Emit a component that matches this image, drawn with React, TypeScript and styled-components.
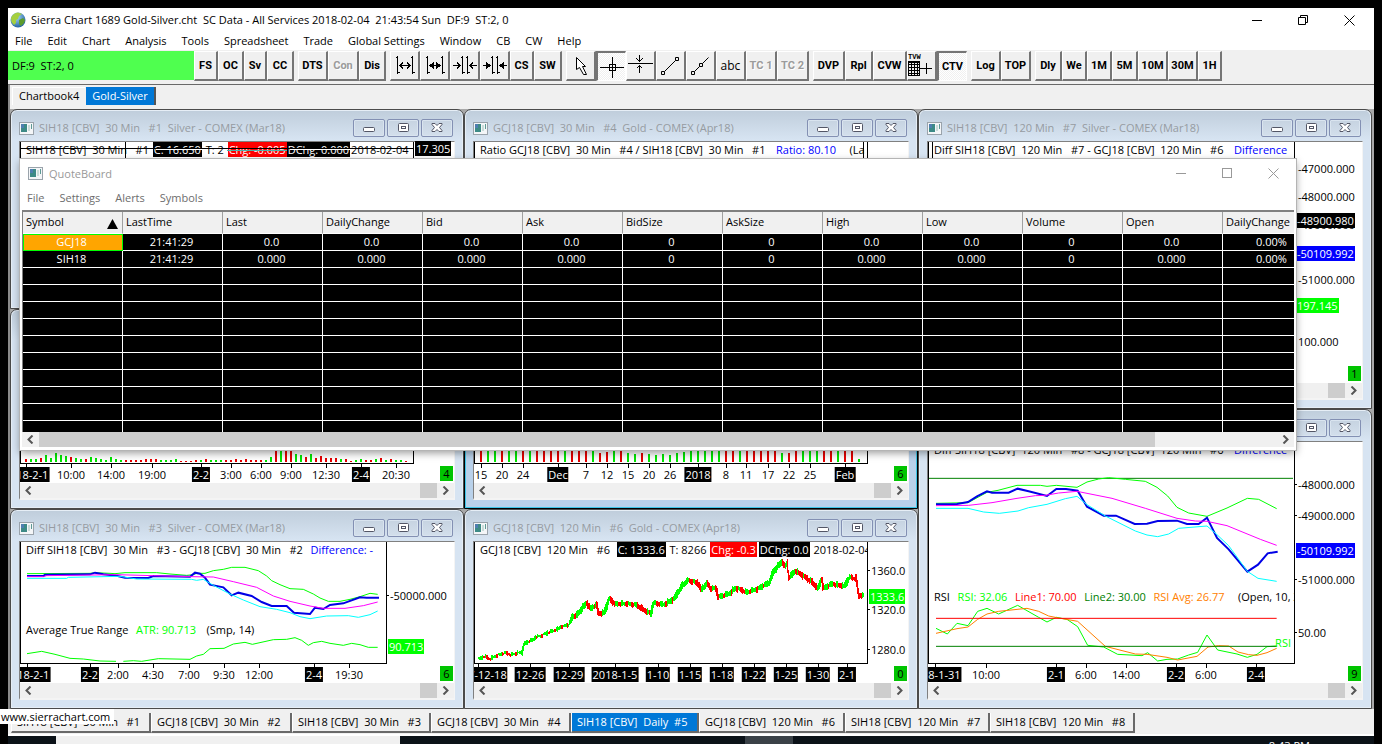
import React from "react";
import styled, { createGlobalStyle, css } from "styled-components";

const Global = createGlobalStyle`
  *, *::before, *::after { box-sizing: border-box; }
  html, body { margin: 0; background: #000; }
  body {
    font-family: "Open Sans", "Noto Sans", sans-serif;
    font-size: 11px;
    line-height: 16px;
    color: #000;
  }
  button, a { font: inherit; color: inherit; }
  button { margin: 0; padding: 0; border: 0; background: none; }
`;

/* ---------- shell ---------- */

const Desktop = styled.div`
  position: relative;
  padding: 8px 8px 0;
  height: 100vh;
  overflow: hidden;
  background: #000;
`;

const AppWindow = styled.div`
  display: flex;
  flex-direction: column;
  background: #f0f0f0;
`;

const TitleBar = styled.header`
  display: flex;
  align-items: center;
  height: 24px;
  padding: 0 2px;
  gap: 5px;
  background: #fff;
  white-space: pre;
`;

const TitleText = styled.h1`
  flex: 1;
  margin: 0;
  font-size: 11px;
  font-weight: 400;
`;

const WindowControls = styled.div`
  display: flex;
  button {
    display: grid;
    place-items: center;
    width: 46px;
    height: 20px;
  }
`;

const MenuBar = styled.nav`
  display: flex;
  gap: 15px;
  height: 18px;
  padding: 0 7px;
  background: #fff;
  button { white-space: pre; }
`;

const Toolbar = styled.div`
  display: flex;
  gap: 4px;
  height: 35px;
  padding: 1px 0 2px;
  border-bottom: 1px solid #696969;
  background: #f0f0f0;
`;

const Status = styled.div`
  width: 186px;
  height: 29px;
  padding: 7px 4px;
  margin-right: -4px;
  background: #4fff4f;
  white-space: pre;
`;

const Group = styled.div`
  display: flex;
`;

const ToolButton = styled.button<{ $w: number; $on?: boolean; $plain?: boolean }>`
  display: grid;
  place-items: center;
  width: ${(p) => p.$w}px;
  height: 30px;
  border: solid;
  border-width: 1px 2px 2px 1px;
  border-color: #fff #757575 #757575 #fff;
  background: #f0f0f0;
  font-family: ${(p) => (p.$plain ? `"Open Sans", sans-serif` : `Roboto, "Liberation Sans", sans-serif`)};
  font-size: ${(p) => (p.$plain ? 12 : 11)}px;
  font-weight: ${(p) => (p.$plain ? 400 : 700)};
  white-space: pre;
  ${(p) =>
    p.$on &&
    css`
      border-width: 2px 1px 1px 2px;
      border-color: #757575 #fff #fff #757575;
      background: repeating-conic-gradient(#fff 0 25%, #f0f0f0 0 50%) 0 0 / 2px 2px;
    `}
  &:disabled { color: #9b9b9b; text-shadow: 1px 1px 0 #fff; }
`;

const BookTabs = styled.div`
  display: flex;
  height: 24px;
  padding: 2px;
  padding-bottom: 4px;
  border-left: 2px solid #8a8a8a;
`;

const BookTab = styled.button<{ $on?: boolean }>`
  padding: 0 6px 2px;
  margin-right: 1px;
  border-left: 1px solid #fff;
  border-top: 1px solid #fff;
  ${(p) =>
    p.$on &&
    css`
      padding: 0 6px;
      border: 0;
      border-right: 2px solid #555;
      background: #0078d7;
      color: #fff;
    `}
`;

const Workspace = styled.main`
  position: relative;
  display: grid;
  grid-template-columns: repeat(3, minmax(0, 1fr));
  grid-template-rows: repeat(6, 100px);
  padding-right: 2px;
  border-left: 2px solid #8a8a8a;
  background: #a8a8a8;
`;

const WindowTabs = styled.div`
  display: flex;
  height: 27px;
  padding: 4px 3px;
  border-bottom: 2px solid #fff;
`;

const WindowTab = styled.button<{ $w: number; $on?: boolean }>`
  width: ${(p) => p.$w}px;
  padding: 0 4px 0 5px;
  height: 20px;
  border-right: 2px solid #696969;
  border-bottom: 2px solid #696969;
  border-left: 1px solid #fff;
  text-align: left;
  white-space: pre;
  overflow: hidden;
  ${(p) => p.$on && css`background: #0078d7; color: #fff;`}
`;

const Taskbar = styled.footer`
  display: flex;
  height: 12px;
  background: #0b1218;
`;

const SearchBox = styled.div`
  width: 344px;
  margin-left: 48px;
  background: #f0f0f0;
`;

const TaskItem = styled.div`
  width: 48px;
  margin-left: 345px;
  background: #3a4147;
`;

const Clock = styled.div`
  margin: 2px 64px 0 auto;
  color: #fff;
`;

const StatusLink = styled.a`
  position: absolute;
  left: 0;
  bottom: 20px;
  width: 114px;
  height: 15px;
  padding: 0 1px;
  background: #fff;
  line-height: 15px;
  text-decoration: none;
`;

/* ---------- chart windows ---------- */

const Frame = styled.section<{ $col: number; $rows: string; $active?: boolean }>`
  display: flex;
  flex-direction: column;
  grid-column: ${(p) => p.$col};
  grid-row: ${(p) => p.$rows};
  padding: 0 8px 8px;
  border: 1px solid ${(p) => (p.$active ? "#000" : "#4b4b4b")};
  border-radius: 7px 7px 0 0;
  background: ${(p) => (p.$active ? "#b9d1ea" : "linear-gradient(#bfcddb, #d7e4f2 30px)")};
  box-shadow: inset 0 0 0 1px ${(p) => (p.$active ? "#3fc6e8" : "#e6eef6")};
`;

const FrameBar = styled.header`
  display: flex;
  align-items: center;
  gap: 5px;
  height: 31px;
  padding: 5px 2px 0 0;
  color: #969ba1;
  white-space: pre;
`;

const FrameTitle = styled.h2`
  flex: 1;
  margin: 0;
  font-size: 11px;
  font-weight: 400;
  overflow: hidden;
`;

const FrameButton = styled.button`
  display: grid;
  place-items: center;
  width: 32px;
  height: 18px;
  margin-left: -3px;
  border: 1px solid #8390b3;
  border-radius: 2px;
  background: linear-gradient(#c6d3e1, #d3dfec);
  box-shadow: inset 0 0 0 1px #d9e4ef;
`;

const Client = styled.div`
  display: flex;
  flex-direction: column;
  flex: 1;
  border: solid;
  border-width: 1px 1px 2px;
  border-color: #808080 #f4f4f4 #f4f4f4 #808080;
  background: #fff;
  min-height: 0;
`;

const ChartArea = styled.div`
  position: relative;
  display: flex;
  flex: 1;
  min-height: 0;
`;

const PlotColumn = styled.div`
  display: flex;
  flex-direction: column;
  flex: 1;
  min-width: 0;
`;

const Plot = styled.div`
  position: relative;
  flex: 1;
  border: 1px solid #000;
  border-top: 0;
  overflow: hidden;
  svg { display: block; position: absolute; inset: 0; width: 100%; height: 100%; }
`;

const Legend = styled.div`
  position: absolute;
  z-index: 1;
  left: 4px;
  display: flex;
  height: 15px;
  line-height: 15px;
  white-space: pre;
`;

const Tag = styled.span<{ $bg?: string; $fg?: string }>`
  background: ${(p) => p.$bg ?? "transparent"};
  color: ${(p) => p.$fg ?? (p.$bg ? "#fff" : "#000")};
  padding: 0 1px;
`;

const TimeAxis = styled.div`
  position: relative;
  height: 19px;
  overflow: hidden;
`;

const TimeMark = styled.span<{ $dark?: boolean }>`
  position: absolute;
  top: 3px;
  height: 15px;
  padding: 0 1px;
  line-height: 15px;
  transform: translateX(-50%);
  white-space: nowrap;
  ${(p) => p.$dark && css`background: #000; color: #fff;`}
`;

const Tick = styled.i`
  position: absolute;
  top: 0;
  width: 1px;
  height: 4px;
  background: #000;
`;

const PriceAxis = styled.div<{ $w: number }>`
  position: relative;
  width: ${(p) => p.$w}px;
`;

const PriceMark = styled.span<{ $bg?: string }>`
  position: absolute;
  left: ${(p) => (p.$bg ? 1 : 2)}px;
  padding: 0 1px;
  height: 15px;
  margin-top: -7px;
  line-height: 15px;
  white-space: nowrap;
  ${(p) => p.$bg && css`background: ${p.$bg}; color: #fff;`}
  ${(p) => !p.$bg && css`
    &::before {
      content: "";
      position: absolute;
      left: -2px;
      top: 7px;
      width: 2px;
      height: 1px;
      background: #000;
    }
  `}
`;

const Badge = styled.span`
  position: absolute;
  right: 1px;
  bottom: 2px;
  width: 13px;
  height: 15px;
  background: #00c400;
  line-height: 15px;
  text-align: center;
`;

const ScrollRow = styled.div`
  display: flex;
  justify-content: space-between;
  align-items: center;
  height: 15px;
  padding: 0 4px;
  background: #f0f0f0;
`;

const ScrollThumb = styled.div<{ $wide?: boolean }>`
  width: 17px;
  height: 15px;
  margin-left: auto;
  margin-right: 5px;
  background: #cdcdcd;
  ${(p) =>
    p.$wide &&
    css`
      flex: 1;
      margin-left: 5px;
      margin-right: 127px;
    `}
`;

/* ---------- quote board ---------- */

const Board = styled.section`
  position: absolute;
  z-index: 5;
  top: 50px;
  left: 10px;
  right: 78px;
  height: 291px;
  display: flex;
  flex-direction: column;
  padding: 0 2px 3px;
  background: #fff;
  box-shadow: 0 0 0 1px #b4b4b4, 0 3px 8px rgba(0, 0, 0, 0.4);
`;

const BoardTitle = styled.header`
  display: flex;
  align-items: center;
  gap: 6px;
  height: 29px;
  margin-right: -2px;
  padding-left: 6px;
  color: #999;
  h2 { flex: 1; margin: 0; font-size: 11px; font-weight: 400; }
`;

const BoardMenu = styled.nav`
  display: flex;
  gap: 15px;
  height: 22px;
  padding: 0 5px 2px;
  color: #6d6d6d;
`;

const BoardBody = styled.div`
  flex: 1;
  min-height: 0;
  overflow: hidden;
  border-top: 2px solid #808080;
  border-left: 1px solid #808080;
  background: #000;
`;

const Quotes = styled.table`
  width: 1300px;
  table-layout: fixed;
  border-collapse: separate;
  border-spacing: 0;
  color: #fff;
  th, td {
    padding: 0;
    font-weight: 400;
    border-right: 1px solid #fff;
    border-bottom: 1px solid #fff;
    white-space: nowrap;
    overflow: hidden;
  }
  th {
    position: relative;
    height: 22px;
    padding: 0 3px 1px;
    background: #f0f0f0;
    border-right-color: #a0a0a0;
    color: #000;
    text-align: left;
  }
  td {
    height: 17px;
    padding-right: 2px;
    line-height: 16px;
    text-align: center;
  }
  td.selected {
    background: #ffa500;
    outline: 1px solid #00ff00;
    outline-offset: -1px;
  }
`;

const SortMark = styled.svg`
  position: absolute;
  right: 4px;
  top: 7px;
`;

/* ---------- icons ---------- */

const Globe = () => (
  <svg width="16" height="16" viewBox="0 0 16 16" aria-hidden="true">
    <defs>
      <radialGradient id="sea" cx="0.4" cy="0.3" r="0.8">
        <stop offset="0" stopColor="#a8dcf5" />
        <stop offset="1" stopColor="#14539a" />
      </radialGradient>
    </defs>
    <circle cx="8" cy="8" r="7.5" fill="url(#sea)" />
    <path d="M1 6Q3 1 8 0.5L12 2 9 4 8 7 6 8 6 11 4 13 1.5 10Z" fill="#a5cf3f" />
    <path d="M9 8L13 6 15 8 14 11 11 14 9 12Z" fill="#5d9c2c" />
  </svg>
);

const SheetIcon = () => (
  <svg width="15" height="13" viewBox="0 0 15 13" aria-hidden="true">
    <rect x="0.5" y="0.5" width="14" height="12" fill="#f4f6f8" stroke="#9aa3ab" />
    <rect x="2" y="2" width="6" height="8" fill="#3d8a86" />
    <rect x="2" y="2" width="3" height="4" fill="#4f7fb0" />
    <rect x="9" y="3" width="2" height="6" fill="#c9dcd8" />
    <rect x="12" y="2" width="1" height="5" fill="#5d9a95" />
  </svg>
);

const MinGlyph = ({ color = "#000" }: { color?: string }) => (
  <svg width="11" height="11" aria-hidden="true"><path d="M0 5.5H10" stroke={color} /></svg>
);
const RestoreGlyph = () => (
  <svg width="11" height="11" aria-hidden="true">
    <path d="M0.5 2.5H7.5V9.5H0.5ZM2.5 2.5V0.5H9.5V7.5H7.5" fill="none" stroke="#000" />
  </svg>
);
const MaxGlyph = () => (
  <svg width="11" height="11" aria-hidden="true"><rect x="0.5" y="0.5" width="9" height="9" fill="none" stroke="#999" /></svg>
);
const CloseGlyph = ({ color = "#000" }: { color?: string }) => (
  <svg width="11" height="11" aria-hidden="true"><path d="M0.5 0.5L10.5 10.5M10.5 0.5L0.5 10.5" stroke={color} /></svg>
);

const FrameGlyph = ({ kind }: { kind: "min" | "max" | "close" }) => (
  <svg width="12" height="10" viewBox="0 0 12 10" aria-hidden="true">
    {kind === "min" && <rect x="0.5" y="4.5" width="11" height="4" rx="1" fill="#fff" stroke="#535666" />}
    {kind === "max" && (
      <g fill="#fff" stroke="#535666">
        <rect x="1.5" y="0.5" width="10" height="8" rx="1" />
        <rect x="4.5" y="3.5" width="4" height="2" />
      </g>
    )}
    {kind === "close" && (
      <path
        d="M1 0.5H4L6 2.5 8 0.5H11V1.5L8.5 4.5 11 7.5V8.5H8L6 6.5 4 8.5H1V7.5L3.5 4.5 1 1.5Z"
        fill="#fff"
        stroke="#535666"
      />
    )}
  </svg>
);

const Chevron = ({ dir }: { dir: "l" | "r" }) => (
  <svg width="8" height="9" viewBox="0 0 8 9" aria-hidden="true">
    <path d={dir === "l" ? "M6.5 0.5L2.5 4.5L6.5 8.5" : "M1.5 0.5L5.5 4.5L1.5 8.5"} fill="none" stroke="#555" strokeWidth="2" />
  </svg>
);

const bar = (x: number) => `M${x} 5V23M${x - 2} 6.5H${x}M${x} 21.5H${x + 2}`;

const toolArt: Record<string, React.ReactNode> = {
  widen: <path d={`${bar(7.5)}${bar(22.5)}M10 14.5H20M13 11.5L10 14.5 13 17.5M17 11.5L20 14.5 17 17.5`} fill="none" />,
  widenBold: (
    <>
      <path d={`${bar(7.5)}${bar(22.5)}M10 14.5H20`} fill="none" />
      <path d="M13.5 11.5V17.5L10 14.5ZM16.5 11.5V17.5L20 14.5Z" fill="#000" />
    </>
  ),
  narrow: <path d={`${bar(12.5)}${bar(17.5)}M3 14.5H10M7 11.5L10 14.5 7 17.5M27 14.5H20M23 11.5L20 14.5 23 17.5`} fill="none" />,
  narrowBold: (
    <>
      <path d={`${bar(12.5)}${bar(17.5)}M3 14.5H10M27 14.5H20`} fill="none" />
      <path d="M6.5 11.5V17.5L10 14.5ZM23.5 11.5V17.5L20 14.5Z" fill="#000" />
    </>
  ),
  pointer: <path d="M10.5 6.5V18.5L13.5 16.5 17.5 23.5H20.5L16.5 15.5H19.5Z" fill="#fff" />,
  cross: <path d="M3 15.5H27M15.5 5V26M12.5 12.5H18.5V18.5H12.5Z" fill="none" />,
  level: <path d="M2 12.5H27M13.5 4V10M10.5 7.5L13.5 10.5 16.5 7.5M13.5 15V22M10.5 17.5L13.5 14.5 16.5 17.5" fill="none" />,
  line: <path d="M8.5 20.5L19.5 9.5M5.5 20.5H8.5V23.5H5.5ZM19.5 6.5H22.5V9.5H19.5Z" fill="none" />,
  ray: <path d="M8.5 20.5L13.5 15.5M16.5 12.5L22.5 6.5M5.5 20.5H8.5V23.5H5.5ZM13.5 12.5H16.5V15.5H13.5Z" fill="none" />,
  grid: (
    <>
      <text x="1" y="8" fontSize="7" fontWeight="700" fontFamily="Liberation Mono, monospace" stroke="none" fill="#000">TVW</text>
      <path d="M1.5 10V24H12.5V10ZM1 13.5H13M1 16.5H13M1 19.5H13M1 22H13M4.5 10V24M7.5 10V24M10 10V24M2 11.5H12M13 17.5H25M19.5 12V23" fill="none" />
    </>
  ),
};

const smoothArt = ["pointer", "line", "ray"];

const ToolIcon = ({ name }: { name: string }) => (
  <svg width="27" height="27" viewBox="1 1 27 27" stroke="#000" shapeRendering={smoothArt.includes(name) ? "auto" : "crispEdges"} aria-hidden="true">
    {toolArt[name]}
  </svg>
);

/* ---------- toolbar data ---------- */

type Tool = { t?: string; icon?: string; w: number; on?: boolean; off?: boolean; plain?: boolean };

const tools: Tool[][] = [
  [{ t: "FS", w: 24 }, { t: "OC", w: 26 }, { t: "Sv", w: 23 }, { t: "CC", w: 27 }],
  [{ t: "DTS", w: 30 }, { t: "Con", w: 31, off: true }, { t: "Dis", w: 27 }],
  [
    { icon: "widen", w: 30 }, { icon: "widenBold", w: 30 }, { icon: "narrow", w: 30 }, { icon: "narrowBold", w: 30 },
    { t: "CS", w: 24 }, { t: "SW", w: 28 },
  ],
  [
    { icon: "pointer", w: 30 }, { icon: "cross", w: 30, on: true }, { icon: "level", w: 30 }, { icon: "line", w: 30 },
    { icon: "ray", w: 30 }, { t: "abc", w: 30, plain: true }, { t: "TC 1", w: 31, off: true }, { t: "TC 2", w: 32, off: true },
  ],
  [{ t: "DVP", w: 32 }, { t: "Rpl", w: 28 }, { t: "CVW", w: 34 }, { icon: "grid", w: 30 }, { t: "CTV", w: 30, on: true }],
  [{ t: "Log", w: 30 }, { t: "TOP", w: 30 }],
  [
    { t: "Dly", w: 27 }, { t: "We", w: 25 }, { t: "1M", w: 25 }, { t: "5M", w: 26 },
    { t: "10M", w: 30 }, { t: "30M", w: 30 }, { t: "1H", w: 24 },
  ],
];

const menus = ["File", "Edit", "Chart", "Analysis", "Tools", "Spreadsheet", "Trade", "Global Settings", "Window", "CB", "CW", "Help"];

const chartTabs: { t: string; w: number; on?: boolean }[] = [
  { t: "SIH18 [CBV]  30 Min   #1", w: 140 },
  { t: "GCJ18 [CBV]  30 Min   #2", w: 141 },
  { t: "SIH18 [CBV]  30 Min   #3", w: 139 },
  { t: "GCJ18 [CBV]  30 Min   #4", w: 140 },
  { t: "SIH18 [CBV]  Daily  #5", w: 128, on: true },
  { t: "GCJ18 [CBV]  120 Min   #6", w: 146 },
  { t: "SIH18 [CBV]  120 Min   #7", w: 145 },
  { t: "SIH18 [CBV]  120 Min   #8", w: 145 },
];

/* ---------- chart parts ---------- */

type Mark = [label: string, x: number, dark?: boolean];
type Price = [label: string, y: number, bg?: string];

type ChartProps = {
  plotW: number;
  axisW: number;
  times: Mark[];
  prices: Price[];
  badge: string;
  children?: React.ReactNode;
};

const Chart = ({ plotW, axisW, times, prices, badge, children }: ChartProps) => {
  // Marks are measured from inside the plot's one-pixel left border.
  const at = (x: number) => `${((x + 1) / plotW) * 100}%`;
  return (
    <Client>
      <ChartArea>
        <PlotColumn>
          <Plot>{children}</Plot>
          <TimeAxis>
            {times.map(([label, x, dark]) => (
              <React.Fragment key={label + x}>
                <Tick style={{ left: at(x) }} />
                <TimeMark $dark={dark} style={{ left: at(x) }}>{label}</TimeMark>
              </React.Fragment>
            ))}
          </TimeAxis>
        </PlotColumn>
        <PriceAxis $w={axisW}>
          {prices.map(([label, y, bg]) => (
            <PriceMark key={label} $bg={bg} style={{ top: y }}>{label}</PriceMark>
          ))}
        </PriceAxis>
        <Badge>{badge}</Badge>
      </ChartArea>
      <ScrollRow>
        <Chevron dir="l" />
        <ScrollThumb />
        <Chevron dir="r" />
      </ScrollRow>
    </Client>
  );
};

const ChartWindow = ({ title, col, rows, active, children }: { title: string; col: number; rows: string; active?: boolean; children: React.ReactNode }) => (
  <Frame $col={col} $rows={rows} $active={active}>
    <FrameBar>
      <SheetIcon />
      <FrameTitle>{title}</FrameTitle>
      <FrameButton aria-label="Minimize"><FrameGlyph kind="min" /></FrameButton>
      <FrameButton aria-label="Maximize"><FrameGlyph kind="max" /></FrameButton>
      <FrameButton aria-label="Close"><FrameGlyph kind="close" /></FrameButton>
    </FrameBar>
    {children}
  </Frame>
);

const Line = ({ pts, c, w = 1 }: { pts: string; c: string; w?: number }) => (
  <polyline points={pts} fill="none" stroke={c} strokeWidth={w} vectorEffect="non-scaling-stroke" />
);

const GREEN = "#00ff00";
const RED = "#e60000";

/* Volume strip: one letter for the colour and one number for the height of each bar. */
const volume = (spec: string) => spec.split(" ").map((s) => ({ c: s[0] === "g" ? "#00e600" : RED, h: Number(s.slice(1)) }));

const silverVolume = volume(
  "r3 g3 g3 r4 g7 g4 g9 g7 g6 r5 g4 g3 r3 g5 g4 g3 g2 g5 g3 g2 r2 r2 r2 r2 r3 r3 r3 g2 g2 g2 g3 r1 r1 r1 r2 g2 r3 g2 g2 g2 r2 r2 r3 r2 r3 r2 r2 r2 g2 g5 r16 g20 r22 r15 g8 g7 r5 g8 r4 r6 r4 r4 r4 g3 r3 r1 g2 g3 r2 r2 g3 r4 g2 r3 g2 g2 r1"
);
const goldVolume = volume(
  "r20 g20 g18 r20 g16 g19 r20 g20 r22 r20 r19 r20 g11 r20 r11 r20 g16 r9 r10 g14 r11 g9 g8 r9 g8 g7 g8 g7 g9 g10 g11 g20 g18 g20 g20 r21 r20 g18 r19 r20 r18 r18 r16 g9 r9 r15 g20 g20 g19 r20 r18 g20 r18 r18 g3"
);

const Bars = ({ data, start, step, w }: { data: { c: string; h: number }[]; start: number; step: number; w: number }) => (
  <svg viewBox="0 0 392 121" preserveAspectRatio="none" shapeRendering="crispEdges">
    {data.map((b, i) => (
      <rect key={i} x={start + i * step} y={120 - b.h} width={w} height={b.h} fill={b.c} />
    ))}
  </svg>
);

const goldPath: [number, number][] = [
  [54, 658], [72, 650], [88, 658], [110, 647], [135, 640], [150, 645], [185, 638], [190, 615], [205, 605], [220, 600],
  [224, 592], [245, 588], [265, 577], [290, 570], [300, 562], [325, 555], [335, 532], [350, 525], [378, 490], [390, 506],
  [408, 497], [415, 522], [430, 520], [447, 478], [465, 493], [500, 492], [530, 496], [545, 508], [570, 522], [580, 490],
  [610, 495], [640, 478], [650, 462], [665, 438], [683, 422], [712, 430], [722, 450], [740, 430], [750, 446], [765, 446],
  [775, 472], [805, 462], [825, 445], [860, 458], [890, 448], [925, 430], [940, 395], [965, 365], [974, 382], [980, 370],
  [985, 415], [1005, 393], [1030, 410], [1055, 427], [1072, 447], [1083, 420], [1090, 446], [1115, 432], [1150, 440],
  [1168, 412], [1187, 418], [1195, 468], [1212, 466],
];

const goldAt = (x: number) => {
  let i = 0;
  while (i < goldPath.length - 2 && goldPath[i + 1][0] < x) i++;
  const [x0, y0] = goldPath[i];
  const [x1, y1] = goldPath[i + 1];
  return y0 + ((y1 - y0) * (x - x0)) / (x1 - x0);
};

const candles = Array.from({ length: 386 }, (_, i) => {
  const x = 54 + i * 3;
  const wobble = ((i * 7919) % 13) - 6;
  const slope = goldAt(x + 3) - goldAt(x - 3);
  const up = slope + wobble * 0.9 < 0;
  const spread = (x > 330 ? 6 : 3) + ((i * 31) % 5) + Math.min(12, Math.abs(slope) / 2);
  return { x, y: goldAt(x) - spread + wobble / 3, h: spread * 2 - 2, c: up ? GREEN : "#f00" };
});

/* ---------- application ---------- */

const columns = ["Symbol", "LastTime", "Last", "DailyChange", "Bid", "Ask", "BidSize", "AskSize", "High", "Low", "Volume", "Open", "DailyChange"];
const quotes = [
  ["GCJ18", "21:41:29", "0.0", "0.0", "0.0", "0.0", "0", "0", "0.0", "0.0", "0", "0.0", "0.00%"],
  ["SIH18", "21:41:29", "0.000", "0.000", "0.000", "0.000", "0", "0", "0.000", "0.000", "0", "0.000", "0.00%"],
  ...Array.from({ length: 10 }, () => Array(13).fill("") as string[]),
];

export default function App() {
  return (
    <Desktop>
      <Global />
      <AppWindow>
        <TitleBar>
          <Globe />
          <TitleText>Sierra Chart 1689 Gold-Silver.cht  SC Data - All Services 2018-02-04  21:43:54 Sun  DF:9  ST:2, 0</TitleText>
          <WindowControls>
            <button aria-label="Minimize"><MinGlyph /></button>
            <button aria-label="Restore"><RestoreGlyph /></button>
            <button aria-label="Close"><CloseGlyph /></button>
          </WindowControls>
        </TitleBar>
        <MenuBar>{menus.map((m) => <button key={m}>{m}</button>)}</MenuBar>
        <Toolbar>
          <Status>DF:9  ST:2, 0</Status>
          {tools.map((group, g) => (
            <Group key={g}>
              {group.map((b) => (
                <ToolButton key={b.t ?? b.icon} $w={b.w} $on={b.on} $plain={b.plain} disabled={b.off} aria-label={b.t ?? b.icon}>
                  {b.icon ? <ToolIcon name={b.icon} /> : b.t}
                </ToolButton>
              ))}
            </Group>
          ))}
        </Toolbar>
        <BookTabs>
          <BookTab>Chartbook4</BookTab>
          <BookTab $on>Gold-Silver</BookTab>
        </BookTabs>

        <Workspace>
          <ChartWindow title="SIH18 [CBV]  30 Min   #1  Silver - COMEX (Mar18)" col={1} rows="1 / span 2">
            <Chart plotW={394} axisW={40} times={[]} prices={[["17.305", 6, "#000"]]} badge="1">
              <Legend>
                <Tag>SIH18 [CBV]  30 Min   #1 </Tag>
                <Tag $bg="#000">C: 16.650</Tag>
                <Tag> T: 2 </Tag>
                <Tag $bg="#f00">Chg: -0.005</Tag>
                <Tag $bg="#000">DChg: 0.000</Tag>
                <Tag>2018-02-04</Tag>
              </Legend>
              <svg style={{ zIndex: 2 }} viewBox="0 0 392 121" preserveAspectRatio="none" shapeRendering="crispEdges">
                <path d="M0 6.5H392M104.5 0V17" stroke="#000" />
                <path d="M206 8.5H266" stroke="#4fb0a8" />
                <path d="M135 7.5H182M269 7.5H330" stroke="#fff" />
              </svg>
            </Chart>
          </ChartWindow>

          <ChartWindow title="SIH18 [CBV]  30 Min   #2  Silver - COMEX (Mar18)" col={1} rows="3 / span 2">
            <Chart
              plotW={394}
              axisW={40}
              badge="4"
              prices={[]}
              times={[
                ["2018-2-1", 5, true], ["10:00", 50], ["14:00", 90], ["19:00", 131], ["2-2", 180, true], ["3:00", 210],
                ["6:00", 240], ["9:00", 270], ["12:30", 305], ["2-4", 340, true], ["20:30", 375],
              ]}
            >
              <Bars data={silverVolume} start={4} step={5} w={2} />
            </Chart>
          </ChartWindow>

          <ChartWindow title="SIH18 [CBV]  30 Min   #3  Silver - COMEX (Mar18)" col={1} rows="5 / span 2">
            <Chart
              plotW={367}
              axisW={67}
              badge="6"
              prices={[["-50000.000", 53], ["90.713", 104, GREEN]]}
              times={[
                ["2018-2-1", 6, true], ["2-2", 69, true], ["2:00", 97], ["4:30", 132], ["7:00", 168], ["9:30", 203],
                ["12:00", 238], ["2-4", 293, true], ["19:30", 328],
              ]}
            >
              <Legend>
                <Tag>Diff SIH18 [CBV]  30 Min   #3 - GCJ18 [CBV]  30 Min   #2  </Tag>
                <Tag $fg="#00f">Difference: -</Tag>
              </Legend>
              <Legend style={{ top: 80 }}>
                <Tag>Average True Range  </Tag>
                <Tag $fg={GREEN}>ATR: 90.713 </Tag>
                <Tag>  (Smp, 14)</Tag>
              </Legend>
              <svg viewBox="63 306 1095 363" preserveAspectRatio="none">
                <Line c={GREEN} pts="81,401 270,400 285,398 330,400 345,401 375,398 470,398 510,402 560,406 580,404 590,400 615,400 640,392 670,388 695,382 735,382 775,392 800,408 815,422 840,434 870,446 910,448 940,462 960,474 985,484 1020,484 1050,478 1080,470 1110,460 1133,463" />
                <Line c="#0000e6" w={2} pts="81,408 130,408 135,404 270,403 285,398 310,403 350,407 375,413 445,414 460,408 570,410 585,398 600,401 615,413 630,434 670,442 695,466 715,458 755,468 785,486 815,498 860,498 882,518 930,522 945,503 970,507 990,495 1030,490 1080,472 1100,473 1137,473" />
                <Line c="#ff00ff" pts="81,410 130,410 140,407 350,404 460,407 570,410 640,411 700,425 770,442 820,468 870,484 930,498 970,505 1035,505 1090,497 1133,486" />
                <Line c="#00ffff" pts="81,415 200,415 205,412 360,409 410,417 575,418 590,421 610,418 640,436 690,462 730,480 780,500 830,508 870,518 900,530 930,536 980,528 1045,527 1075,532 1110,524 1133,513" />
                <Line c={GREEN} pts="81,641 125,634 165,643 210,655 250,657 300,663 348,664" />
                <Line c={GREEN} pts="370,664 400,662 425,664 475,656 570,658 590,648 610,643 630,626 672,625 700,612 735,607 757,613 820,599 860,598 885,593 905,601 925,616 940,608 965,604 990,610 1030,616 1055,610 1080,614 1105,622 1133,622" />
              </svg>
            </Chart>
          </ChartWindow>

          <ChartWindow title="GCJ18 [CBV]  30 Min   #4  Gold - COMEX (Apr18)" col={2} rows="1 / span 2">
            <Chart plotW={394} axisW={40} times={[]} prices={[]} badge="5">
              <Legend>
                <Tag>Ratio GCJ18 [CBV]  30 Min   #4 / SIH18 [CBV]  30 Min   #1   </Tag>
                <Tag $fg="#00f">Ratio: 80.10  </Tag>
                <Tag>  (La</Tag>
              </Legend>
              <svg viewBox="0 0 392 121" preserveAspectRatio="none" shapeRendering="crispEdges">
                <path d="M388.5 0V121" stroke="#000" />
              </svg>
            </Chart>
          </ChartWindow>

          <ChartWindow title="SIH18 [CBV]  Daily  #5  Silver - COMEX (Mar18)" col={2} rows="3 / span 2" active>
            <Chart
              plotW={394}
              axisW={40}
              badge="6"
              prices={[]}
              times={[
                ["15", 6], ["20", 27], ["24", 48], ["Dec", 83, true], ["7", 111], ["12", 132], ["15", 153], ["20", 174], ["26", 195],
                ["2018", 223, true], ["8", 251], ["11", 271], ["17", 293], ["22", 314], ["25", 335], ["Feb", 370, true],
              ]}
            >
              <Bars data={goldVolume} start={5} step={7} w={2} />
            </Chart>
          </ChartWindow>

          <ChartWindow title="GCJ18 [CBV]  120 Min   #6  Gold - COMEX (Apr18)" col={2} rows="5 / span 2">
            <Chart
              plotW={394}
              axisW={40}
              badge="0"
              prices={[["1360.0", 28], ["1320.0", 67], ["1280.0", 107], ["1333.6", 54, GREEN]]}
              times={[
                ["2017-12-18", 3, true], ["12-26", 55, true], ["12-29", 94, true], ["2018-1-5", 140, true], ["1-10", 183, true],
                ["1-15", 215, true], ["1-18", 247, true], ["1-22", 279, true], ["1-25", 311, true], ["1-30", 343, true], ["2-1", 372, true],
              ]}
            >
              <Legend>
                <Tag>GCJ18 [CBV]  120 Min   #6  </Tag>
                <Tag $bg="#000">C: 1333.6</Tag>
                <Tag> T: 8266 </Tag>
                <Tag $bg="#f00">Chg: -0.3</Tag>
                <Tag />
                <Tag $bg="#000">DChg: 0.0</Tag>
                <Tag> 2018-02-04</Tag>
              </Legend>
              <svg viewBox="45 306 1176 363" preserveAspectRatio="none" shapeRendering="crispEdges">
                {candles.map((k) => (
                  <rect key={k.x} x={k.x} y={k.y} width="4" height={k.h} fill={k.c} />
                ))}
              </svg>
            </Chart>
          </ChartWindow>

          <ChartWindow title="SIH18 [CBV]  120 Min   #7  Silver - COMEX (Mar18)" col={3} rows="1 / span 3">
            <Chart
              plotW={367}
              axisW={67}
              badge="1"
              times={[]}
              prices={[
                ["-47000.000", 26], ["-48000.000", 54], ["-49000.000", 82], ["-48900.980", 78, "#000"], ["-50109.992", 111, "#00f"],
                ["-51000.000", 137], ["197.145", 163, GREEN], ["100.000", 199],
              ]}
            >
              <Legend>
                <Tag>Diff SIH18 [CBV]  120 Min   #7 - GCJ18 [CBV]  120 Min   #6   </Tag>
                <Tag $fg="#00f">Difference</Tag>
              </Legend>
              <svg viewBox="0 0 365 221" preserveAspectRatio="none" shapeRendering="crispEdges">
                <path d="M3.5 0V221" stroke="#000" />
              </svg>
            </Chart>
          </ChartWindow>

          <ChartWindow title="SIH18 [CBV]  120 Min   #8  Silver - COMEX (Mar18)" col={3} rows="4 / span 3">
            <Chart
              plotW={367}
              axisW={67}
              badge="9"
              times={[
                ["2018-1-31", 6, true], ["10:00", 57], ["2-1", 127, true], ["6:00", 157], ["14:00", 197], ["2-2", 247, true],
                ["6:00", 277], ["2-4", 327, true],
              ]}
              prices={[["-48000.000", 42], ["-49000.000", 73], ["-50109.992", 108, "#00f"], ["-51000.000", 137], ["50.00", 190]]}
            >
              <Legend>
                <Tag>Diff SIH18 [CBV]  120 Min   #8 - GCJ18 [CBV]  120 Min   #6   </Tag>
                <Tag $fg="#00f">Difference</Tag>
              </Legend>
              <Legend style={{ top: 147 }}>
                <Tag>RSI  </Tag>
                <Tag $fg={GREEN}>RSI: 32.06  </Tag>
                <Tag $fg="#f00">Line1: 70.00  </Tag>
                <Tag $fg="#008000">Line2: 30.00  </Tag>
                <Tag $fg="#ff8000">RSI Avg: 26.77  </Tag>
                <Tag>  (Open, 10, 3,</Tag>
              </Legend>
              <Legend style={{ top: 193, left: "auto", right: 2 }}>
                <Tag $fg={GREEN}>RSI</Tag>
              </Legend>
              <svg viewBox="51 96 1095 663" preserveAspectRatio="none">
                <Line c="#008000" pts="51,205 1143,205" />
                <Line c={GREEN} pts="72,280 168,278 225,247 258,241 315,226 385,226 405,229 433,226 495,232 525,216 560,207 590,203 640,208 700,214 735,232 767,258 795,292 830,309 885,319 945,294 1006,265 1040,268 1094,296" />
                <Line c="#0000e6" w={2} pts="72,283 135,282 168,276 195,259 225,244 240,248 290,248 317,236 350,244 405,258 433,237 462,237 497,242 525,290 575,317 612,317 668,342 705,341 737,333 795,332 825,342 860,342 885,323 915,384 950,418 1006,485 1038,464 1067,430 1097,425" />
                <Line c="#ff00ff" pts="72,287 170,286 240,278 315,265 370,257 400,256 440,249 495,244 600,265 700,295 795,325 850,333 885,334 945,347 1045,388 1094,406" />
                <Line c="#00ffff" pts="72,295 168,295 215,306 262,310 318,303 350,293 405,283 460,266 495,259 525,284 580,318 670,363 705,375 737,380 770,372 800,355 885,348 915,374 950,407 1006,484 1038,505 1094,514" />
                <Line c={GREEN} pts="72,655 106,672 135,640 168,647 197,604 225,595 260,612 317,586 380,622 405,636 433,622 465,628 497,650 527,706 575,711 617,733 690,737 707,728 737,753 765,748 797,747 830,735 857,727 885,675 917,720 975,732 1006,742 1035,733 1065,710 1094,708" />
                <Line c="#ff8000" pts="72,670 135,656 168,651 197,628 225,612 260,604 345,595 380,604 410,618 440,624 497,634 580,709 670,732 705,733 765,742 797,750 855,739 888,711 920,707 950,708 978,726 1010,734 1035,736 1065,728 1094,715" />
                <Line c="#f00" pts="72,625 1094,625" />
                <Line c="#008000" pts="72,709 1094,709" />
              </svg>
            </Chart>
          </ChartWindow>

          <Board>
            <BoardTitle>
              <SheetIcon />
              <h2>QuoteBoard</h2>
              <WindowControls>
                <button aria-label="Minimize"><MinGlyph color="#999" /></button>
                <button aria-label="Maximize"><MaxGlyph /></button>
                <button aria-label="Close"><CloseGlyph color="#999" /></button>
              </WindowControls>
            </BoardTitle>
            <BoardMenu>{["File", "Settings", "Alerts", "Symbols"].map((m) => <button key={m}>{m}</button>)}</BoardMenu>
            <BoardBody>
              <Quotes>
                <thead>
                  <tr>
                    {columns.map((c, i) => (
                      <th key={i} scope="col">
                        {c}
                        {i === 0 && <SortMark width="11" height="10" aria-hidden="true"><path d="M5.5 0L11 10H0Z" /></SortMark>}
                      </th>
                    ))}
                  </tr>
                </thead>
                <tbody>
                  {quotes.map((row, r) => (
                    <tr key={r}>
                      {row.map((cell, i) => (
                        <td key={i} className={r === 0 && i === 0 ? "selected" : undefined}>{cell}</td>
                      ))}
                    </tr>
                  ))}
                </tbody>
              </Quotes>
            </BoardBody>
            <ScrollRow>
              <Chevron dir="l" />
              <ScrollThumb $wide />
              <Chevron dir="r" />
            </ScrollRow>
          </Board>
        </Workspace>

        <WindowTabs>
          {chartTabs.map((t) => (
            <WindowTab key={t.t} $w={t.w} $on={t.on}>{t.t}</WindowTab>
          ))}
        </WindowTabs>
        <Taskbar>
          <SearchBox />
          <TaskItem />
          <Clock>8:43 PM</Clock>
        </Taskbar>
      </AppWindow>
      <StatusLink href="#sierrachart">www.sierrachart.com</StatusLink>
    </Desktop>
  );
}
